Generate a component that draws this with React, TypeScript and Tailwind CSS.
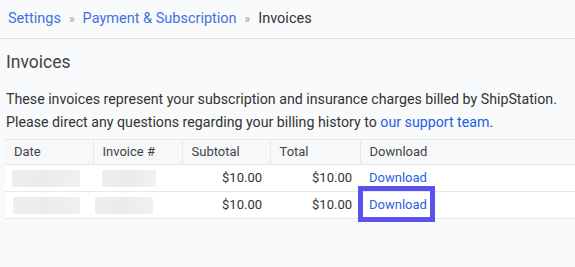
import React from 'react'

const rows = [
  { dateW: 'w-[68px]', dateMl: 'ml-[7px]', invW: 'w-[54px]', invMl: 'ml-[9px]', highlight: false },
  { dateW: 'w-[67px]', dateMl: 'ml-[8px]', invW: 'w-[58px]', invMl: 'ml-[2px]', highlight: true },
]

function Blur({ w, ml }: { w: string; ml: string }) {
  return <div className={`h-[17px] rounded-[2px] bg-gradient-to-r from-[#eeeeee] via-[#ebebeb] to-[#f1f1f1] ${w} ${ml}`} />
}

export default function App() {
  return (
    <div className="h-[267px] w-[575px] overflow-hidden bg-[#f9fafb] font-['Roboto',sans-serif] text-[#333]">
      <div className="flex h-[39px] items-center gap-[8px] border-b border-[#e1e3e8] pl-[8px] text-[14.5px]">
        <a className="text-[#3f72e0]">Settings</a>
        <span className="text-[12px] text-[#999]">»</span>
        <a className="text-[#3f72e0]">Payment &amp; Subscription</a>
        <span className="text-[12px] text-[#999]">»</span>
        <span className="text-[#333]">Invoices</span>
      </div>

      <h1 className="mt-[11px] pl-[6px] text-[17.5px] leading-[24px] text-[#444]">Invoices</h1>

      <p className="mt-[14px] whitespace-nowrap pl-[6px] text-[14.2px] leading-[23px] text-[#333]">
        These invoices represent your subscription and insurance charges billed by ShipStation.
        <br />
        Please direct any questions regarding your billing history to{' '}
        <a className="text-[#1d5fe6]">our support team</a>.
      </p>

      <table className="ml-[5px] mt-[5px] w-[570px] table-fixed border-collapse text-[13px]">
        <colgroup>
          <col className="w-[88px]" />
          <col className="w-[89px]" />
          <col className="w-[88px]" />
          <col className="w-[90px]" />
          <col />
        </colgroup>
        <thead>
          <tr className="h-[25px] border-y border-[#e6e8ec] bg-[#f7f8fa] text-left text-[#444]">
            <th className="border-r border-[#e6e8ec] pl-[9px] font-normal">Date</th>
            <th className="border-r border-[#e6e8ec] pl-[9px] font-normal">Invoice #</th>
            <th className="border-r border-[#e6e8ec] pl-[9px] font-normal">Subtotal</th>
            <th className="border-r border-[#e6e8ec] pl-[9px] font-normal">Total</th>
            <th className="pl-[9px] font-normal">Download</th>
          </tr>
        </thead>
        <tbody className="bg-white">
          {rows.map((r, i) => (
            <tr key={i} className="h-[27px] border-b border-[#e6e8ec]">
              <td>
                <Blur w={r.dateW} ml={r.dateMl} />
              </td>
              <td>
                <Blur w={r.invW} ml={r.invMl} />
              </td>
              <td className="pr-[8px] text-right">$10.00</td>
              <td className="pr-[8px] text-right">$10.00</td>
              <td className="pl-[9px]">
                <span className="relative inline-block">
                  <a className="text-[#2b63e0]">Download</a>
                  {r.highlight && (
                    <span className="absolute left-[-11px] top-[-9px] h-[36px] w-[77px] border-[5px] border-[#5b50f0]" />
                  )}
                </span>
              </td>
            </tr>
          ))}
        </tbody>
      </table>
    </div>
  )
}
